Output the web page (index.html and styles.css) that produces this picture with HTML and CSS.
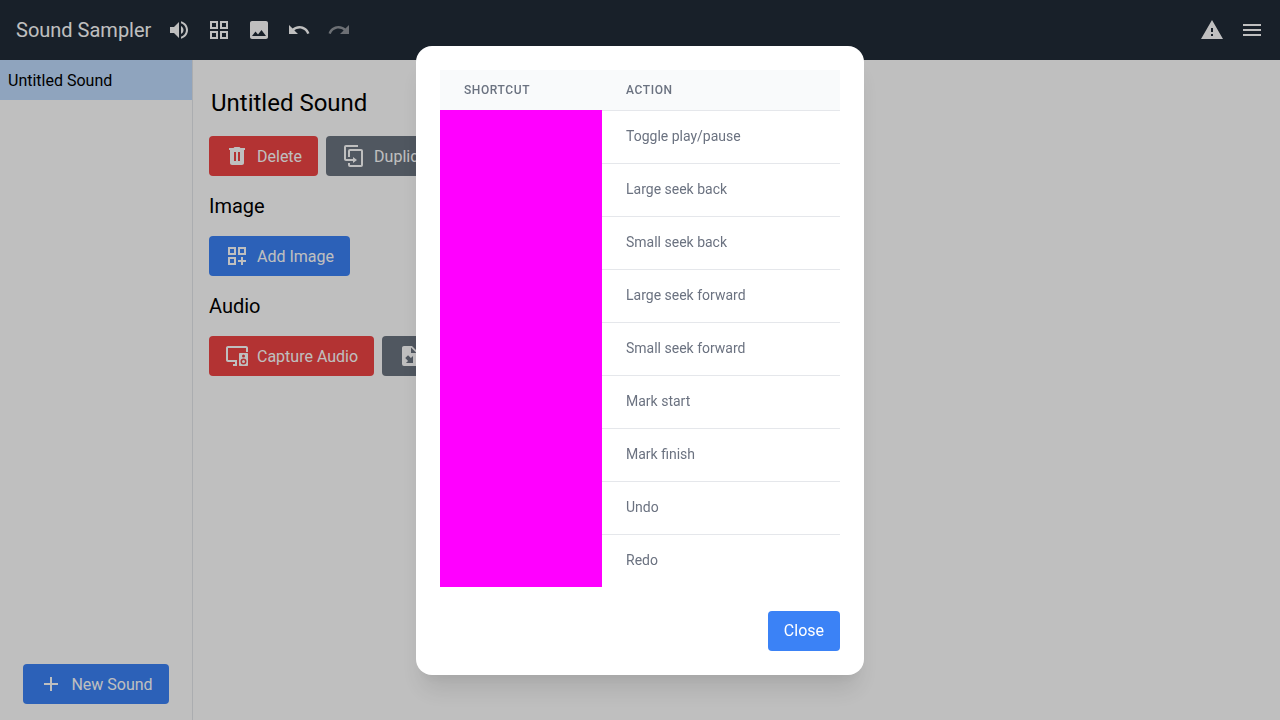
FILE: index.html
```html
<!DOCTYPE html>
<html lang="en">
<head>
<meta charset="utf-8">
<title>Sound Sampler</title>
<link rel="stylesheet" href="styles.css">
</head>
<body>
<div class="app">
  <header class="header">
    <h1 class="brand">Sound Sampler</h1>
    <nav class="tools">
      <svg class="icon" viewBox="0 0 24 24"><path d="M3 9v6h4l5 5V4L7 9H3zm13.500 3c0-1.770-1.020-3.290-2.500-4.030v8.050c1.480-.73 2.500-2.250 2.500-4.020zM14 3.230v2.060c2.890.86 5 3.540 5 6.710s-2.110 5.850-5 6.710v2.060c4.010-.91 7-4.490 7-8.770s-2.990-7.860-7-8.770z"/></svg>
      <svg class="icon" viewBox="0 0 24 24"><path fill-rule="evenodd" d="M3 3v8h8V3H3zm6 6H5V5h4v4zm-6 4v8h8v-8H3zm6 6H5v-4h4v4zm4-16v8h8V3h-8zm6 6h-4V5h4v4zm-6 4v8h8v-8h-8zm6 6h-4v-4h4v4z"/></svg>
      <svg class="icon" viewBox="0 0 24 24"><path d="M21 19V5c0-1.100-.9-2-2-2H5c-1.100 0-2 .9-2 2v14c0 1.100.9 2 2 2h14c1.100 0 2-.9 2-2zM8.500 13.500l2.500 3.010L14.500 12l4.500 6H5l3.500-4.500z"/></svg>
      <svg class="icon" viewBox="0 0 24 24"><path d="M12.500 8c-2.650 0-5.050.99-6.900 2.600L2 7v9h9l-3.620-3.620c1.390-1.160 3.160-1.880 5.120-1.880 3.540 0 6.550 2.310 7.600 5.500l2.370-.78C21.080 11.030 17.150 8 12.500 8z"/></svg>
      <svg class="icon icon-disabled" viewBox="0 0 24 24"><path d="M18.400 10.600C16.550 8.990 14.150 8 11.500 8c-4.650 0-8.580 3.030-9.960 7.220L3.900 16c1.050-3.190 4.050-5.500 7.600-5.500 1.950 0 3.730.72 5.120 1.880L13 16h9V7l-3.600 3.600z"/></svg>
    </nav>
    <nav class="tools tools-end">
      <svg class="icon" viewBox="0 0 24 24"><path d="M1 21h22L12 2 1 21zm12-3h-2v-2h2v2zm0-4h-2v-4h2v4z"/></svg>
      <svg class="icon" viewBox="0 0 24 24"><path d="M3 18h18v-2H3v2zm0-5h18v-2H3v2zm0-7v2h18V6H3z"/></svg>
    </nav>
  </header>
  <div class="body">
    <aside class="sidebar">
      <div class="sound-item">Untitled Sound</div>
      <div class="sidebar-foot">
        <button class="btn btn-blue"><svg class="icon" viewBox="0 0 24 24"><path d="M19 13h-6v6h-2v-6H5v-2h6V5h2v6h6v2z"/></svg><span class="label">New Sound</span></button>
      </div>
    </aside>
    <main class="editor">
      <h2 class="sound-title">Untitled Sound</h2>
      <div class="btn-row">
        <button class="btn btn-red"><svg class="icon" viewBox="0 0 24 24"><path fill-rule="evenodd" d="M15.500 4l-1-1h-5l-1 1H4v2h1v13c0 1.100.9 2 2 2h10c1.100 0 2-.9 2-2V6h1V4zM9 8h2v9H9zm4 0h2v9h-2z"/></svg><span class="label">Delete</span></button>
        <button class="btn btn-gray"><svg class="icon" viewBox="0 0 24 24"><path d="M11 17H4a2 2 0 0 1-2-2V3a2 2 0 0 1 2-2h12v2H4v12h7v-2l4 3-4 3v-2m8 4V7H8v6H6V7a2 2 0 0 1 2-2h11a2 2 0 0 1 2 2v14a2 2 0 0 1-2 2H8a2 2 0 0 1-2-2v-2h2v2h11z"/></svg><span class="label">Duplicate</span></button>
      </div>
      <h3 class="section-title">Image</h3>
      <div class="btn-row">
        <button class="btn btn-blue"><svg class="icon" viewBox="0 0 24 24"><path fill-rule="evenodd" d="M3 3h8v8H3zM5 5v4h4V5zM13 3h8v8h-8zm2 2v4h4V5zM3 13h8v8H3zm2 2v4h4v-4zM16 13h2v3h3v2h-3v3h-2v-3h-3v-2h3z"/></svg><span class="label">Add Image</span></button>
      </div>
      <h3 class="section-title">Audio</h3>
      <div class="btn-row">
        <button class="btn btn-red"><svg class="icon" viewBox="0 0 24 24"><path fill-rule="evenodd" d="M21 2H3c-1.100 0-2 .9-2 2v12c0 1.100.9 2 2 2h7v2H8v2h4v-6H3V4h18v4h2V4c0-1.100-.9-2-2-2zM15 9h7c.55 0 1 .45 1 1v11c0 .55-.45 1-1 1h-7c-.55 0-1-.45-1-1V10c0-.55.45-1 1-1zm3.500 1.500a1.500 1.500 0 1 0 0 3 1.500 1.500 0 0 0 0-3zm0 4a3 3 0 1 0 0 6 3 3 0 0 0 0-6zm0 1.500a1.500 1.500 0 1 1 0 3 1.500 1.500 0 0 1 0-3z"/></svg><span class="label">Capture Audio</span></button>
        <button class="btn btn-gray"><svg class="icon" viewBox="0 0 24 24"><path fill-rule="evenodd" d="M6 2c-1.110 0-2 .9-2 2v16a2 2 0 0 0 2 2h12a2 2 0 0 0 2-2V8l-6-6zM13 3.500L18.500 9H13zM10.050 11.220l2.830 2.830L15 11.930V19H7.930l2.120-2.120-2.830-2.830z"/></svg><span class="label">Import Audio</span></button>
      </div>
    </main>
  </div>
</div>
<div class="overlay">
  <section class="modal" role="dialog">
    <table class="shortcuts">
      <thead><tr><th class="key-col">Shortcut</th><th>Action</th></tr></thead>
      <tbody>
        <tr><td class="key-cell"></td><td>Toggle play/pause</td></tr>
        <tr><td class="key-cell"></td><td>Large seek back</td></tr>
        <tr><td class="key-cell"></td><td>Small seek back</td></tr>
        <tr><td class="key-cell"></td><td>Large seek forward</td></tr>
        <tr><td class="key-cell"></td><td>Small seek forward</td></tr>
        <tr><td class="key-cell"></td><td>Mark start</td></tr>
        <tr><td class="key-cell"></td><td>Mark finish</td></tr>
        <tr><td class="key-cell"></td><td>Undo</td></tr>
        <tr><td class="key-cell"></td><td>Redo</td></tr>
      </tbody>
    </table>
    <div class="modal-foot"><button class="btn btn-blue">Close</button></div>
  </section>
</div>
</body>
</html>
```
FILE: styles.css
```css
* { box-sizing: border-box; margin: 0; padding: 0; }
body { font: 16px/24px Roboto, sans-serif; color: #000; background: #fff; overflow: hidden; }
.app { display: flex; flex-direction: column; height: 100vh; }
.header { display: flex; align-items: center; justify-content: space-between; height: 60px; padding: 0 16px; background: #202b37; color: #fff; }
.brand { font-size: 20px; line-height: 28px; font-weight: 400; margin-right: 16px; }
.tools { display: flex; gap: 16px; }
.tools-end { margin-left: auto; }
.icon { display: block; flex: none; width: 24px; height: 24px; fill: currentColor; }
.icon-disabled { opacity: .5; }
.body { display: flex; flex: 1; min-height: 0; }
.sidebar { display: flex; flex-direction: column; justify-content: space-between; width: 193px; border-right: 1px solid #e5e7eb; }
.sound-item { height: 40px; padding: 9px 8px 7px; background: #bfdbfe; }
.sidebar-foot { display: flex; justify-content: center; padding: 16px; }
.btn { display: flex; align-items: center; gap: 8px; height: 40px; padding: 0 16px; border: 0; border-radius: 4px; font: inherit; color: #fff; white-space: nowrap; }
.label { padding-top: 2px; }
.btn-blue { background: #3b82f6; }
.btn-red { background: #ef4444; }
.btn-gray { background: #6b7480; }
.editor { flex: 1; padding: 24px 16px; }
.sound-title { font-size: 24px; line-height: 32px; font-weight: 400; padding: 3px 2px; }
.btn-row { display: flex; gap: 8px; margin-top: 14px; }
.section-title { font-size: 20px; line-height: 28px; font-weight: 400; margin-top: 16px; }
.section-title + .btn-row { margin-top: 16px; }
.overlay { position: fixed; inset: 0; display: flex; align-items: center; justify-content: center; background: rgba(0, 0, 0, .25); }
.modal { width: 448px; padding: 24px; border-radius: 16px; background: #fff; box-shadow: 0 20px 25px -5px rgba(0, 0, 0, .1), 0 10px 10px -5px rgba(0, 0, 0, .04); }
.shortcuts { width: 100%; border-collapse: separate; border-spacing: 0; table-layout: fixed; }
.shortcuts th { height: 40px; padding: 12px 24px; text-align: left; font-size: 12px; line-height: 16px; font-weight: 500; letter-spacing: .6px; text-transform: uppercase; color: #6b7280; background: #f9fafb; }
.shortcuts .key-col { width: 162px; }
.shortcuts td { height: 53px; padding: 15px 24px 17px; border-top: 1px solid #e5e7eb; font-size: 14px; line-height: 20px; color: #6b7280; }
.shortcuts .key-cell { background: #f0f; border-color: #f0f; }
.modal-foot { display: flex; justify-content: flex-end; margin-top: 24px; }
```
